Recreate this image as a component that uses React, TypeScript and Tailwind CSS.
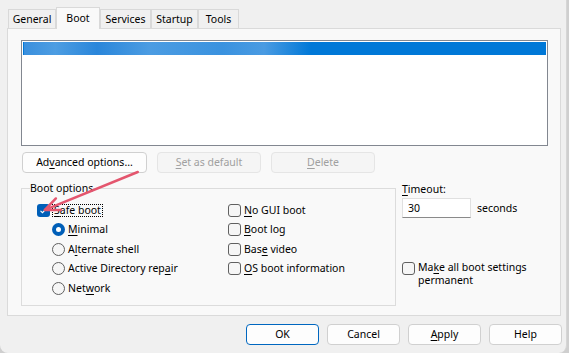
import type { ReactNode } from 'react';

function U({ children }: { children: ReactNode }) {
    return <span className="underline underline-offset-[2px] decoration-[1px]">{children}</span>;
}

function Tab({ label, active, w }: { label: string; active?: boolean; w: string }) {
    if (active) {
        return (
            <div
                className={`${w} relative z-10 -mt-[2px] h-[22px] border border-b-0 border-[#d9d9d9] bg-[#f9f9f9] flex justify-center pt-[5px]`}
            >
                {label}
            </div>
        );
    }
    return (
        <div className={`${w} h-[19px] border border-b-0 border-[#d9d9d9] bg-[#f0f0f0] flex items-center justify-center pt-[1px]`}>
            {label}
        </div>
    );
}

function Button({
    children,
    w,
    disabled,
    primary,
}: {
    children: ReactNode;
    w: string;
    disabled?: boolean;
    primary?: boolean;
}) {
    let look = 'border-[#d0d0d0] bg-[#fdfdfd] text-black';
    if (disabled) look = 'border-[#e5e5e5] bg-[#f5f5f5] text-[#a0a0a0]';
    if (primary) look = 'border-[#0067c0] bg-[#fdfdfd] text-black';
    return <div className={`${w} ${look} h-[21px] border rounded-[4px] flex items-center justify-center`}>{children}</div>;
}

function Checkbox({ checked }: { checked?: boolean }) {
    if (checked) {
        return (
            <div className="w-[13px] h-[13px] shrink-0 rounded-[3px] bg-[#005fb8] flex items-center justify-center">
                <svg width="9" height="9" viewBox="0 0 9 9">
                    <path d="M1.5 4.8 L3.5 6.7 L7.6 2.3" fill="none" stroke="white" strokeWidth="1.1" />
                </svg>
            </div>
        );
    }
    return <div className="w-[13px] h-[13px] shrink-0 rounded-[3px] border border-[#606060] bg-[#f6f6f6]" />;
}

function Radio({ checked }: { checked?: boolean }) {
    if (checked) {
        return (
            <div className="w-[13px] h-[13px] shrink-0 rounded-full bg-[#005fb8] flex items-center justify-center">
                <div className="w-[5px] h-[5px] rounded-full bg-white" />
            </div>
        );
    }
    return <div className="w-[13px] h-[13px] shrink-0 rounded-full border border-[#606060] bg-[#f6f6f6]" />;
}

export default function App() {
    return (
        <div className="w-[569px] h-[353px] bg-[#cfcfcf] font-['Noto_Sans',sans-serif] text-[10.5px] leading-none text-black">
            <div className="relative w-[567px] h-[353px] bg-[#f0f0f0] rounded-b-[8px] border-r border-[#d6d6d6] flex flex-col">
                {/* tabs */}
                <div className="flex pl-[8px] pt-[9px] h-[28px]">
                    <Tab label="General" w="w-[48px]" />
                    <Tab label="Boot" w="w-[44px]" active />
                    <Tab label="Services" w="w-[51px]" />
                    <Tab label="Startup" w="w-[47px]" />
                    <Tab label="Tools" w="w-[41px]" />
                </div>

                {/* tab page */}
                <div className="ml-[7px] w-[554px] h-[288px] border border-[#dadada] bg-[#f9f9f9] flex flex-col">
                    <div className="ml-[13px] mt-[11px] w-[527px] h-[106px] border border-[#828790] bg-white p-[1px]">
                        <div className="h-[13px] border-l border-[#0078d7] bg-[linear-gradient(90deg,#3a8fdd_0%,#4d9de2_6%,#2a86da_14%,#4c9ce2_24%,#3a92df_38%,#4a9be2_46%,#0078d7_55%,#0078d7_100%)]" />
                    </div>

                    <div className="flex gap-[10px] ml-[14px] mt-[6px]">
                        <Button w="w-[125px]">
                            Ad<U>v</U>anced options...
                        </Button>
                        <Button w="w-[104px]" disabled>
                            <U>S</U>et as default
                        </Button>
                        <Button w="w-[104px]" disabled>
                            <U>D</U>elete
                        </Button>
                    </div>

                    <div className="flex ml-[13px] mt-[8px]">
                        <fieldset className="w-[375px] h-[125px] border border-[#dcdcdc]">
                            <legend className="ml-[8px] leading-[14px]">Boot options</legend>
                            <div className="flex pl-[15px] pt-[6px]">
                                <div className="w-[191px] flex flex-col">
                                    <div className="h-[19px] flex items-center">
                                        <Checkbox checked />
                                        <span className="ml-[2px] border border-dotted border-black px-[1px] h-[13px] flex items-center">
                                            <U>S</U>afe boot
                                        </span>
                                    </div>
                                    <div className="h-[19px] flex items-center pl-[15px]">
                                        <Radio checked />
                                        <span className="ml-[3px]">
                                            <U>M</U>inimal
                                        </span>
                                    </div>
                                    <div className="h-[20px] flex items-center pl-[15px]">
                                        <Radio />
                                        <span className="ml-[3px]">
                                            A<U>l</U>ternate shell
                                        </span>
                                    </div>
                                    <div className="h-[19px] flex items-center pl-[15px]">
                                        <Radio />
                                        <span className="ml-[3px]">
                                            Active Directory rep<U>a</U>ir
                                        </span>
                                    </div>
                                    <div className="h-[20px] flex items-center pl-[15px]">
                                        <Radio />
                                        <span className="ml-[3px]">
                                            Net<U>w</U>ork
                                        </span>
                                    </div>
                                </div>
                                <div className="flex flex-col">
                                    <div className="h-[19px] flex items-center">
                                        <Checkbox />
                                        <span className="ml-[3px]">
                                            <U>N</U>o GUI boot
                                        </span>
                                    </div>
                                    <div className="h-[19px] flex items-center">
                                        <Checkbox />
                                        <span className="ml-[3px]">
                                            <U>B</U>oot log
                                        </span>
                                    </div>
                                    <div className="h-[20px] flex items-center">
                                        <Checkbox />
                                        <span className="ml-[3px]">
                                            Bas<U>e</U> video
                                        </span>
                                    </div>
                                    <div className="h-[19px] flex items-center">
                                        <Checkbox />
                                        <span className="ml-[3px]">
                                            <U>O</U>S boot information
                                        </span>
                                    </div>
                                </div>
                            </div>
                        </fieldset>

                        <div className="ml-[6px] flex flex-col">
                            <div className="pt-[1px] leading-[14px]">
                                <U>T</U>imeout:
                            </div>
                            <div className="flex items-center mt-[2px]">
                                <div className="w-[69px] h-[20px] border border-[#e0e0e0] border-b-[#8a8a8a] bg-white pl-[5px] flex items-center">
                                    30
                                </div>
                                <span className="ml-[6px]">seconds</span>
                            </div>
                            <div className="flex items-start mt-[44px]">
                                <Checkbox />
                                <div className="ml-[3px] -mt-[1px] flex flex-col leading-[12.5px]">
                                    <div>
                                        Ma<U>k</U>e all boot settings
                                    </div>
                                    <div>permanent</div>
                                </div>
                            </div>
                        </div>
                    </div>
                </div>

                {/* dialog buttons */}
                <div className="flex gap-[8px] ml-[246px] mt-[8px]">
                    <Button w="w-[73px]" primary>
                        OK
                    </Button>
                    <Button w="w-[73px]">Cancel</Button>
                    <Button w="w-[73px]">
                        <U>A</U>pply
                    </Button>
                    <Button w="w-[73px]">Help</Button>
                </div>

                {/* red annotation arrow */}
                <svg className="absolute inset-0 w-full h-full pointer-events-none" viewBox="0 0 567 353">
                    <g stroke="#e4566e" strokeWidth="2.5" strokeLinecap="round" fill="none">
                        <line x1="138" y1="172" x2="45" y2="210" />
                        <polyline points="56,198.5 45,210 61,210" strokeLinejoin="round" />
                    </g>
                </svg>
            </div>
        </div>
    );
}
